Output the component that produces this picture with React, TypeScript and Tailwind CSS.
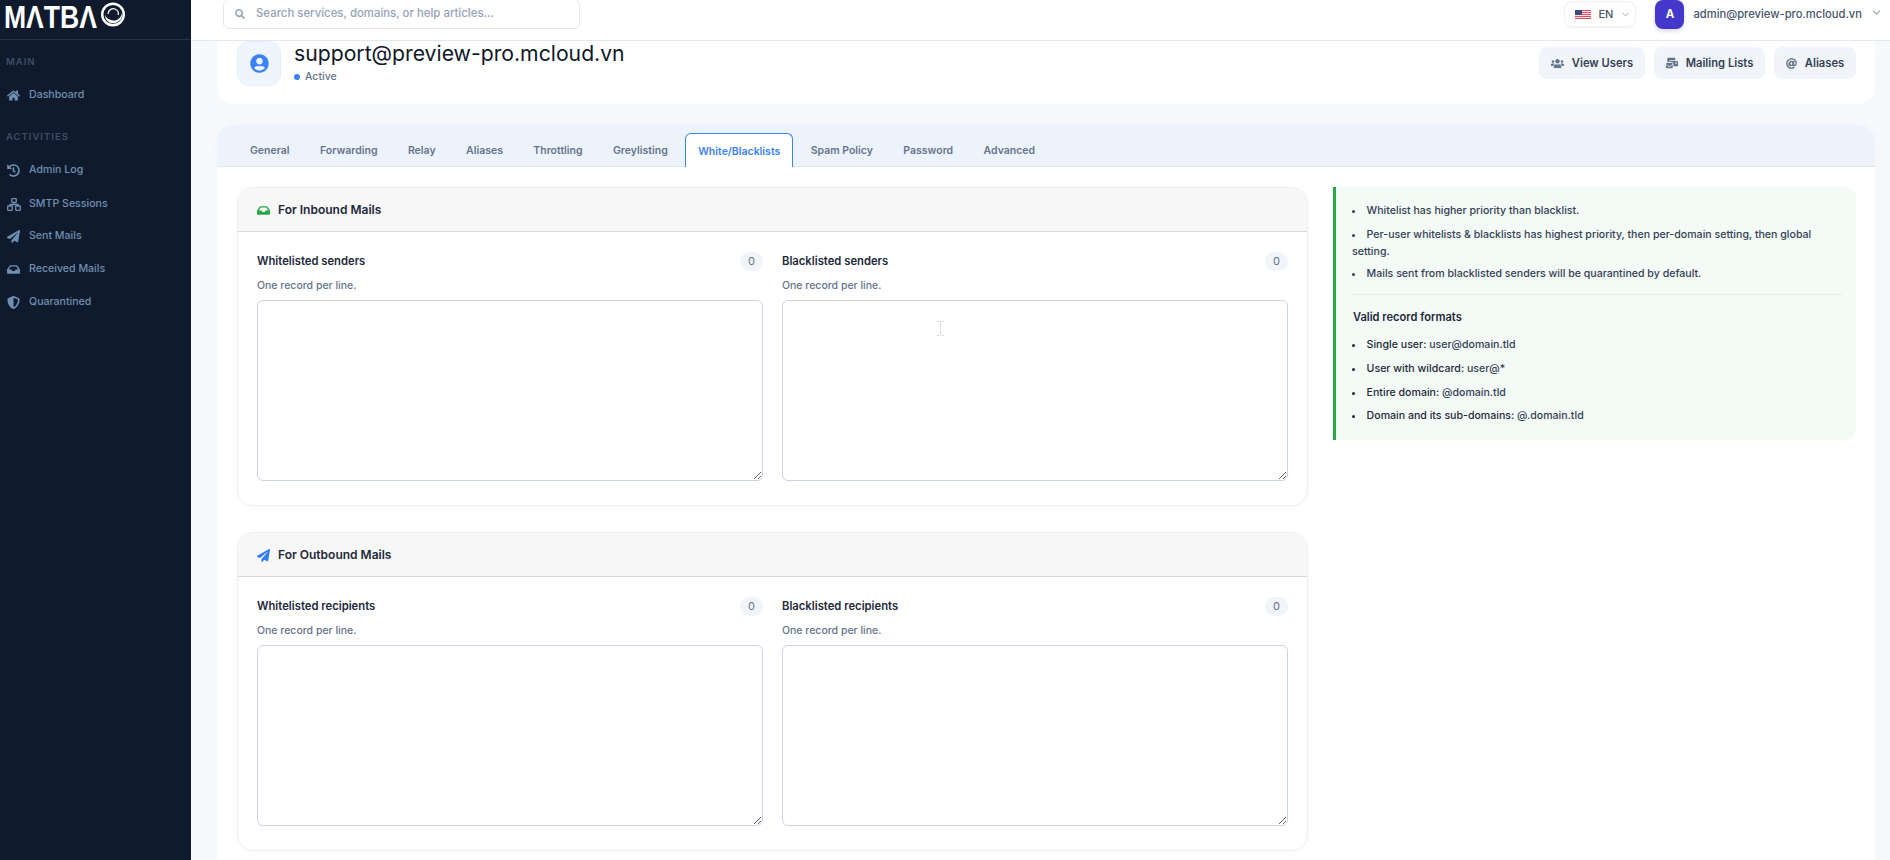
import React from "react";
import { FaHome, FaHistory, FaPaperPlane, FaInbox, FaShieldAlt, FaSearch, FaUsers, FaMailBulk, FaAt, FaUserCircle } from "react-icons/fa";
import { LuChevronDown } from "react-icons/lu";

const font = { fontFamily: "Inter, 'Noto Sans', sans-serif" };

function NavItem({ icon, label, cls }: { icon: React.ReactNode; label: string; cls: string }) {
  return (
    <div className={`flex items-center pl-[7px] text-[10.6px] font-medium text-[#6f8fb3] ${cls}`}>
      <span className="w-[22px] text-[13px] text-[#6f8fb3]">{icon}</span>
      <span>{label}</span>
    </div>
  );
}

function Logo() {
  return (
    <div className="flex items-start pl-[4px]">
      <div className="w-[96px] h-[34px] overflow-visible">
        <span className="inline-block origin-left scale-x-[0.83] text-white font-bold text-[32px] leading-[34px] whitespace-nowrap" style={{ fontFamily: "'Liberation Sans', sans-serif" }}>MΛTBΛ</span>
      </div>
      <svg width="26" height="25" viewBox="0 0 26 25" fill="none" className="mt-[2px]">
        <circle cx="13" cy="12.500" r="10.800" stroke="#fff" strokeWidth="2.400" />
        <path d="M5 13c0 6 5 9 10 8 5-1 8-6 7-10-1 5-5 8-9 7.500-4-.5-7-2.500-8-5.500z" fill="#fff" />
        <path d="M8 12c0-4 4-6 7-5 3 1 4 4 3 6" stroke="#fff" strokeWidth="1.200" />
      </svg>
    </div>
  );
}

function SitemapIcon() {
  return (
    <svg width="14" height="13" viewBox="0 0 14 13" fill="none" stroke="currentColor" strokeWidth="1.300">
      <rect x="4.700" y="0.700" width="4.600" height="3.600" rx="0.500" />
      <path d="M7 4.300v2.200M3 8V6.500h8V8" />
      <rect x="0.700" y="8" width="4.600" height="4.300" rx="0.500" />
      <rect x="8.700" y="8" width="4.600" height="4.300" rx="0.500" />
    </svg>
  );
}

function Field({ label, cursor }: { label: string; cursor?: boolean }) {
  return (
    <div className="flex-1 flex flex-col min-w-0">
      <div className="flex items-center justify-between h-[19px]">
        <span className="text-[11.25px] font-semibold text-[#1e293b]">{label}</span>
        <span className="w-[23px] h-[19px] rounded-full bg-[#f1f5f9] text-[11px] text-[#64748b] flex items-center justify-center">0</span>
      </div>
      <div className="text-[10.5px] font-medium text-[#64748b] mt-[8px] h-[14px] leading-[14px]">One record per line.</div>
      <div className="relative mt-[7px]">
        <textarea className="w-full h-[181px] block border border-[#cbd5e1] rounded-md bg-white outline-none" />
        {cursor && (
          <svg width="7" height="15" viewBox="0 0 7 15" fill="none" className="absolute left-[155px] top-[21px]">
            <path d="M0 .5h2.500l1 1 1-1H7M3.500 1.500v12M0 14.500h2.500l1-1 1 1H7" stroke="#d9dde3" strokeWidth="1" />
          </svg>
        )}
      </div>
    </div>
  );
}

function MailCard({ icon, title, left, right, cls, cursor }: { icon: React.ReactNode; title: string; left: string; right: string; cls?: string; cursor?: boolean }) {
  return (
    <div className={`border border-[#edf0f3] rounded-[16px] overflow-hidden bg-white shadow-[0_1px_4px_rgba(15,23,42,0.03)] ${cls ?? ""}`}>
      <div className="h-[44px] bg-[#f7f7f7] border-b border-[#d6d8db] flex items-center pl-[19px] gap-[8px] pt-[1px]">
        {icon}
        <span className="text-[12px] font-semibold text-[#1e293b]">{title}</span>
      </div>
      <div className="flex gap-[19px] px-[19px] pt-[20px] pb-[24px]">
        <Field label={left} />
        <Field label={right} cursor={cursor} />
      </div>
    </div>
  );
}

const tabs = ["General", "Forwarding", "Relay", "Aliases", "Throttling", "Greylisting", "White/Blacklists", "Spam Policy", "Password", "Advanced"];

export default function App() {
  return (
    <div className="flex h-screen w-full overflow-hidden bg-[#f8f9fb]" style={font}>
      <aside className="w-[191px] shrink-0 bg-[#0f1b2c] flex flex-col">
        <div className="h-[40px] border-b border-[#26344a]"><Logo /></div>
        <div className="text-[9.5px] font-semibold tracking-[1px] text-[#3d4e66] pl-[6px] mt-[16px] h-[12px] leading-[12px]">MAIN</div>
        <NavItem icon={<FaHome />} label="Dashboard" cls="mt-[15px] h-[24px]" />
        <div className="text-[9.5px] font-semibold tracking-[1px] text-[#3d4e66] pl-[6px] mt-[24px] h-[12px] leading-[12px]">ACTIVITIES</div>
        <NavItem icon={<FaHistory />} label="Admin Log" cls="mt-[15px] h-[24px]" />
        <NavItem icon={<SitemapIcon />} label="SMTP Sessions" cls="mt-[10px] h-[24px]" />
        <NavItem icon={<FaPaperPlane />} label="Sent Mails" cls="mt-[8px] h-[24px]" />
        <NavItem icon={<FaInbox />} label="Received Mails" cls="mt-[9px] h-[24px]" />
        <NavItem icon={<FaShieldAlt />} label="Quarantined" cls="mt-[9px] h-[24px]" />
      </aside>

      <div className="flex-1 min-w-0 flex flex-col">
        <header className="h-[41px] shrink-0 bg-white border-b border-[#e2e8f0] flex items-start pl-[32px] pr-[7px]">
          <div className="w-[357px] h-[30px] -mt-px border border-[#e2e8f0] rounded-md flex items-center pl-[11px] gap-[11px]">
            <FaSearch className="text-[10px] text-[#94a3b8]" />
            <span className="text-[11.4px] text-[#94a3b8] font-medium">Search services, domains, or help articles...</span>
          </div>
          <div className="ml-auto flex items-start">
            <div className="w-[72px] h-[26px] mt-px border border-[#eef1f5] rounded-lg shadow-[0_1px_2px_rgba(15,23,42,0.05)] flex items-center pl-[10px] gap-[7px]">
              <svg width="16" height="9" viewBox="0 0 16 9">
                <rect width="16" height="9" fill="#f6dfe3" />
                <rect width="16" height="1" fill="#dc4f68" />
                <rect y="2" width="16" height="1" fill="#dc4f68" />
                <rect y="4" width="16" height="1" fill="#dc4f68" />
                <rect y="6" width="16" height="1" fill="#dc4f68" />
                <rect y="8" width="16" height="1" fill="#dc4f68" />
                <rect width="7" height="5" fill="#3c4a7a" />
              </svg>
              <span className="text-[11px] font-medium text-[#475569]">EN</span>
              <LuChevronDown className="text-[11px] text-[#94a3b8]" />
            </div>
            <div className="w-[29px] h-[29px] ml-[19px] rounded-lg bg-[#4338ca] text-white text-[11.5px] font-bold flex items-center justify-center shadow-[0_2px_4px_rgba(67,56,202,0.2)]">A</div>
            <span className="ml-[9px] mt-[7px] text-[11.2px] font-medium text-[#475569] leading-[15px]">admin@preview-pro.mcloud.vn</span>
            <LuChevronDown className="ml-[8px] mt-[6px] text-[13px] text-[#94a3b8]" />
          </div>
        </header>

        <main className="flex-1 min-h-0 overflow-hidden pl-[26px] pr-[15px]">
          <section className="h-[63px] bg-white rounded-b-[16px] flex items-start pl-[20px] pr-[19px] shadow-[0_4px_16px_rgba(15,23,42,0.015)]">
            <div className="w-[44px] h-[45px] rounded-xl bg-[#eff5ff] border border-[#e6effc] flex items-center justify-center">
              <FaUserCircle className="text-[19px] text-[#3b82f6]" />
            </div>
            <div className="ml-[13px] -mt-px">
              <div className="text-[21.2px] leading-[26px] text-[#0f172a]">support@preview-pro.mcloud.vn</div>
              <div className="flex items-center mt-[4px] text-[10.5px] font-medium text-[#64748b] leading-[14px]">
                <span className="w-[6px] h-[6px] rounded-full bg-[#3b82f6] mr-[5px]" />Active
              </div>
            </div>
            <div className="ml-auto flex gap-[9px] mt-[6px]">
              <button className="w-[106px] h-[32px] rounded-lg bg-[#f1f5f9] text-[11.2px] font-semibold text-[#334155] flex items-center justify-center gap-[8px]"><FaUsers className="text-[13px] text-[#64748b]" />View Users</button>
              <button className="w-[111px] h-[32px] rounded-lg bg-[#f1f5f9] text-[11.2px] font-semibold text-[#334155] flex items-center justify-center gap-[8px]"><FaMailBulk className="text-[12px] text-[#64748b]" />Mailing Lists</button>
              <button className="w-[82px] h-[32px] rounded-lg bg-[#f1f5f9] text-[11.2px] font-semibold text-[#334155] flex items-center justify-center gap-[8px]"><FaAt className="text-[11px] text-[#64748b]" />Aliases</button>
            </div>
          </section>

          <section className="mt-[21px] bg-white rounded-t-[16px] min-h-[800px] shadow-[0_0_16px_rgba(15,23,42,0.02)]">
            <div className="h-[42px] bg-[#edf3fd] rounded-t-[16px] border-b border-[#dfe7f1] flex items-end pl-[20px] gap-[4.4px]">
              {tabs.map((t) => t === "White/Blacklists" ? (
                <div key={t} className="h-[34px] -mb-px px-[12px] pt-[2px] border border-[#3b82f6] border-b-0 rounded-t-md bg-white text-[#3b82f6] text-[10.5px] font-semibold flex items-center">{t}</div>
              ) : (
                <div key={t} className="h-[33px] px-[13px] pt-[2px] text-[10.5px] font-semibold text-[#64748b] flex items-center">{t}</div>
              ))}
            </div>
            <div className="flex items-start pt-[20px] pl-[20px] pr-[19px] gap-[25px]">
              <div className="w-[1071px] shrink-0">
                <MailCard cursor icon={<FaInbox className="text-[13px] text-[#28a745]" />} title="For Inbound Mails" left="Whitelisted senders" right="Blacklisted senders" />
                <MailCard cls="mt-[26px]" icon={<FaPaperPlane className="text-[13px] text-[#2f7df6]" />} title="For Outbound Mails" left="Whitelisted recipients" right="Blacklisted recipients" />
              </div>
              <div className="flex-1 min-w-0 h-[253px] bg-[#f4faf5] border-l-[3px] border-[#28a745] rounded-r-[10px] pl-[16px] pr-[14px] pt-[16px] text-[10.6px] font-medium text-[#334155]">
                <ul className="list-disc list-inside pr-[3px]">
                  <li className="leading-[16px] mb-[7px]">Whitelist has higher priority than blacklist.</li>
                  <li className="leading-[17px] mb-[6px]">Per-user whitelists &amp; blacklists has highest priority, then per-domain setting, then global setting.</li>
                  <li className="leading-[16px]">Mails sent from blacklisted senders will be quarantined by default.</li>
                </ul>
                <div className="border-t border-[#e4ebe8] mt-[12px] ml-px" />
                <div className="mt-[14px] ml-px text-[11.1px] font-semibold text-[#1e293b] leading-[16px]">Valid record formats</div>
                <ul className="list-disc list-inside mt-[12px] text-[#1e293b]">
                  <li className="leading-[16px] mb-[8px]">Single user: <span className="text-[#334155]">user@domain.tld</span></li>
                  <li className="leading-[16px] mb-[8px]">User with wildcard: <span className="text-[#334155]">user@*</span></li>
                  <li className="leading-[16px] mb-[7px]">Entire domain: <span className="text-[#334155]">@domain.tld</span></li>
                  <li className="leading-[16px]">Domain and its sub-domains: <span className="text-[#334155]">@.domain.tld</span></li>
                </ul>
              </div>
            </div>
          </section>
        </main>
      </div>
    </div>
  );
}
